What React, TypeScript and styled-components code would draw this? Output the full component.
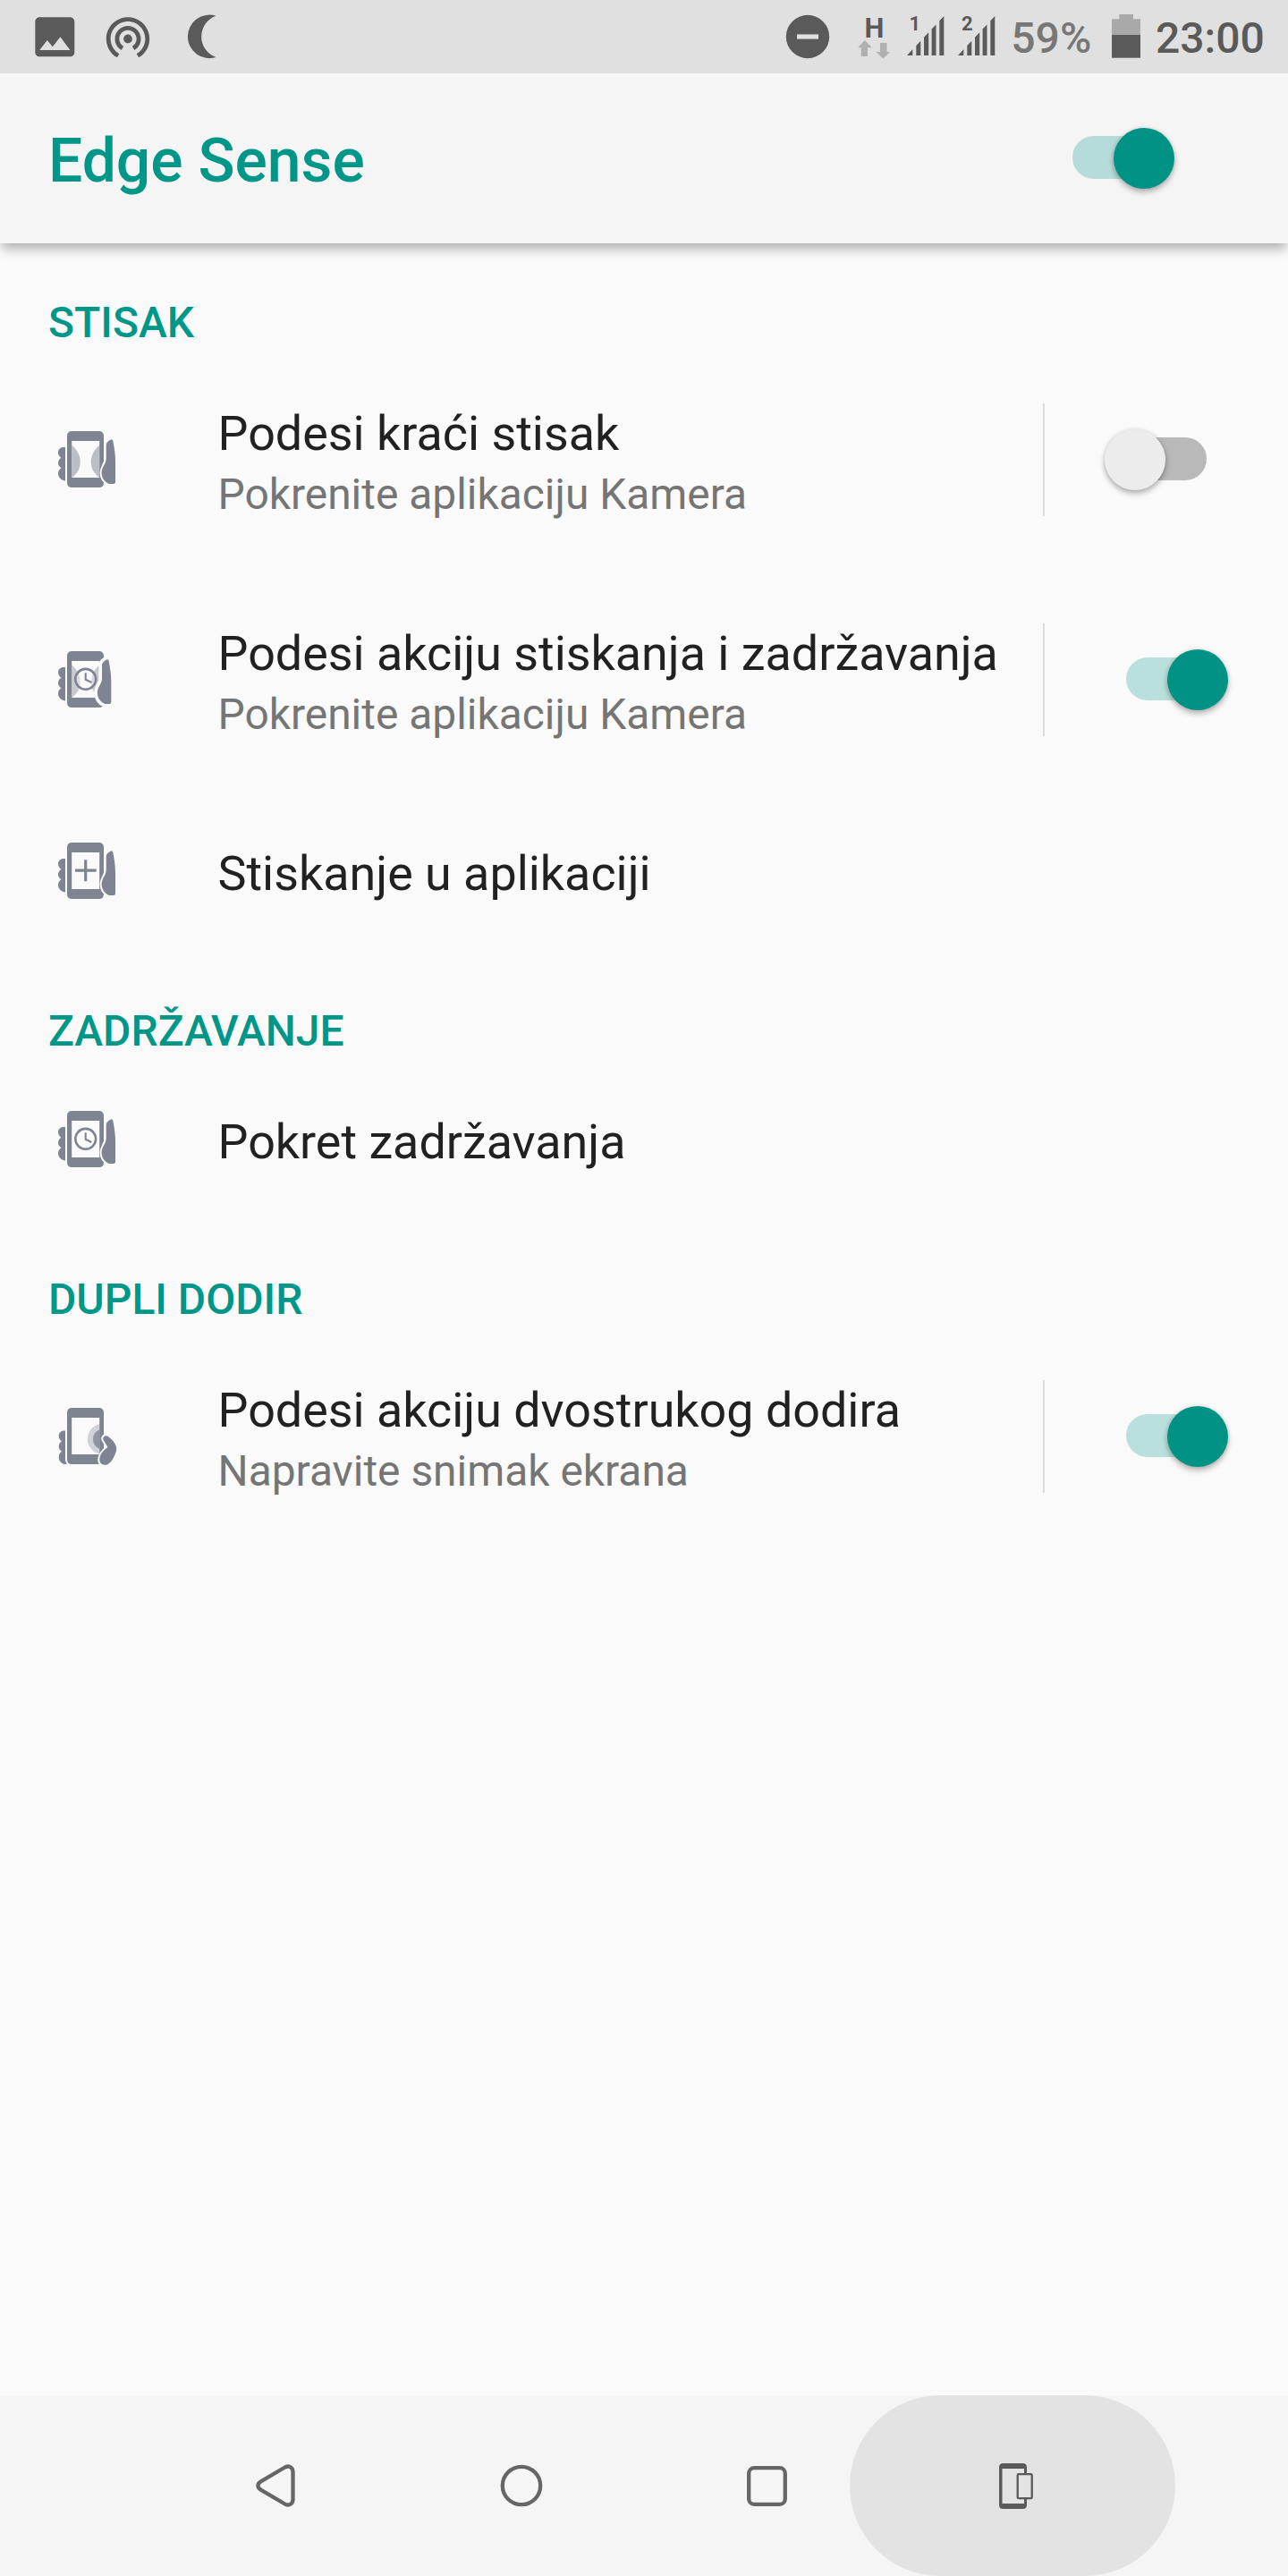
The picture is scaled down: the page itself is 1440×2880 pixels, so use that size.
import React from "react";
import styled, { createGlobalStyle } from "styled-components";

const TEAL = "#009688";
const STATUS_INK = "#5a5a5a";
const GLYPH = "#7e8492";
const SURFACE = "#fafafa";

const GlobalStyle = createGlobalStyle`
  * { box-sizing: border-box; }
  body {
    margin: 0;
    background: ${SURFACE};
    font-family: Roboto, "Noto Sans", sans-serif;
  }
  svg { display: block; flex: none; overflow: visible; }
`;

const Screen = styled.div`
  display: flex;
  flex-direction: column;
  width: 1440px;
  height: 2880px;
  background: ${SURFACE};
  overflow: hidden;
`;

/* ---------- status bar ---------- */

const StatusBar = styled.div`
  position: relative;
  z-index: 2;
  display: flex;
  justify-content: space-between;
  flex: none;
  height: 82px;
  padding: 0 28px 0 32px;
  background: #e0e0e0;
`;

const StatusGroup = styled.div`
  display: flex;
  align-items: center;
`;

const StatusItem = styled.div<{ $before?: number; $lift?: number }>`
  flex: none;
  margin-left: ${(p) => p.$before ?? 0}px;
  margin-bottom: ${(p) => p.$lift ?? 0}px;
`;

const StatusText = styled.div<{ $before: number; $width: number; $color: string }>`
  flex: none;
  width: ${(p) => p.$width}px;
  margin-left: ${(p) => p.$before}px;
  padding-top: 3px;
  font-size: 48px;
  line-height: 56px;
  font-weight: 500;
  white-space: nowrap;
  color: ${(p) => p.$color};
`;

const DataIndicator = styled.div`
  display: flex;
  flex-direction: column;
  align-items: center;
  flex: none;
  width: 36px;
  height: 48px;
  margin-top: 2px;
  margin-left: 32px;
`;

const DataType = styled.span`
  height: 27px;
  font-size: 31px;
  line-height: 27px;
  font-weight: 700;
  color: ${STATUS_INK};
`;

const SignalBox = styled.div<{ $before: number }>`
  position: relative;
  flex: none;
  margin-left: ${(p) => p.$before}px;
  margin-bottom: 2px;
`;

const SimNumber = styled.span<{ $left: number }>`
  position: absolute;
  top: -1px;
  left: ${(p) => p.$left}px;
  font-size: 22px;
  line-height: 20px;
  font-weight: 700;
  color: ${STATUS_INK};
`;

const ImageIcon = () => (
  <svg width="58.6" height="58.6" viewBox="0 0 24 24" fill={STATUS_INK}>
    <path d="M21 19V5c0-1.1-.9-2-2-2H5c-1.1 0-2 .9-2 2v14c0 1.1.9 2 2 2h14c1.1 0 2-.9 2-2zM8.5 13.5l2.5 3.01L14.5 12l4.5 6H5l3.5-4.5z" />
  </svg>
);

const HotspotIcon = () => (
  <svg width="58" height="58" viewBox="0 0 24 24" fill={STATUS_INK}>
    <path d="M12 11c-1.1 0-2 .9-2 2s.9 2 2 2 2-.9 2-2-.9-2-2-2zm6 2c0-3.31-2.69-6-6-6s-6 2.69-6 6c0 2.22 1.21 4.15 3 5.19l1-1.74c-1.19-.7-2-1.97-2-3.45 0-2.21 1.79-4 4-4s4 1.79 4 4c0 1.48-.81 2.75-2 3.45l1 1.74c1.79-1.04 3-2.97 3-5.19zM12 3C6.48 3 2 7.48 2 13c0 3.7 2.01 6.92 4.99 8.65l1-1.73C5.61 18.53 4 15.96 4 13c0-4.42 3.58-8 8-8s8 3.58 8 8c0 2.96-1.61 5.53-4 6.92l1 1.73c2.99-1.73 5-4.95 5-8.65 0-5.52-4.48-10-10-10z" />
  </svg>
);

const MoonIcon = () => (
  <svg width="32" height="50" viewBox="0 0 32 50" fill={STATUS_INK}>
    <path d="M31.4 1.7A24.3 24.3 0 1 0 31.4 48.1A24.7 24.7 0 0 1 31.4 1.7Z" />
  </svg>
);

const DoNotDisturbIcon = () => (
  <svg width="48" height="48" viewBox="0 0 48 48">
    <circle cx="24" cy="24" r="24.2" fill={STATUS_INK} />
    <rect x="12" y="21.4" width="24" height="5.2" fill="#e0e0e0" />
  </svg>
);

const DataArrows = () => (
  <svg width="36" height="21" viewBox="0 0 36 21" fill="#b0b0b0">
    <path d="M7.9 0L15.8 8.3H11V18H3.8V8.3H0Z" />
    <path d="M25 3H32.5V13H36.2L28.4 20.6L20.6 13H25Z" />
  </svg>
);

const SIGNAL_BARS: [number, number][] = [
  [0, 6.3],
  [10.3, 15.3],
  [19, 24.2],
  [27.6, 32.5],
  [36.3, 41.3],
];

const SignalIcon = () => {
  const top = (x: number) => 44 * (1 - x / 41.3);
  return (
    <svg width="41.3" height="44" viewBox="0 0 41.3 44" fill={STATUS_INK}>
      {SIGNAL_BARS.map(([a, b]) => (
        <polygon key={a} points={`${a},44 ${a},${top(a)} ${b},${top(b)} ${b},44`} />
      ))}
    </svg>
  );
};

const BatteryIcon = () => (
  <svg width="32" height="49" viewBox="0 0 32 49">
    <path d="M8.3 0H24V5.3H32V23H0V5.3H8.3Z" fill="#a9a9a9" />
    <rect y="23" width="32" height="25.7" fill={STATUS_INK} />
  </svg>
);

/* ---------- app bar ---------- */

const AppBar = styled.header`
  position: relative;
  z-index: 1;
  display: flex;
  align-items: center;
  justify-content: space-between;
  flex: none;
  height: 190px;
  padding: 0 127px 0 54px;
  background: #f5f5f5;
  box-shadow: 0 8px 12px -2px rgba(0, 0, 0, 0.3);
`;

const Title = styled.h1`
  margin: 6px 0 0;
  font-size: 67.8px;
  line-height: 80px;
  font-weight: 500;
  color: ${TEAL};
`;

/* ---------- switch ---------- */

const Track = styled.div<{ $on: boolean }>`
  position: relative;
  flex: none;
  width: 92px;
  height: 48px;
  margin-top: -2px;
  margin-left: ${(p) => (p.$on ? 0 : 22)}px;
  margin-right: ${(p) => (p.$on ? 22 : 0)}px;
  border-radius: 24px;
  background: ${(p) => (p.$on ? "rgba(0, 150, 136, 0.26)" : "rgba(0, 0, 0, 0.26)")};
`;

const Thumb = styled.div<{ $on: boolean }>`
  position: absolute;
  top: -9px;
  left: ${(p) => (p.$on ? 46 : -22)}px;
  width: 68px;
  height: 68px;
  border-radius: 50%;
  background: ${(p) => (p.$on ? "#009385" : "#ececec")};
  box-shadow: 0 4px 6px rgba(0, 0, 0, 0.26), 0 0 5px rgba(0, 0, 0, 0.12);
`;

const Switch = ({ on }: { on: boolean }) => (
  <Track $on={on} role="switch" aria-checked={on}>
    <Thumb $on={on} />
  </Track>
);

/* ---------- settings list ---------- */

const List = styled.main`
  flex: 1;
  padding-top: 1px;
`;

const Category = styled.h2`
  height: 118px;
  margin: 0;
  padding: 60px 54px 0;
  font-size: 48px;
  line-height: 56px;
  font-weight: 500;
  color: ${TEAL};
`;

const Row = styled.div<{ $tall: boolean }>`
  display: flex;
  height: ${(p) => (p.$tall ? 246 : 182)}px;
  padding-left: 65px;
`;

const RowIcon = styled.div`
  display: flex;
  align-items: center;
  flex: none;
  width: 178.5px;
`;

const RowText = styled.div`
  flex: 1;
  padding-top: 62px;
  white-space: nowrap;
`;

const RowTitle = styled.div`
  font-size: 53.85px;
  line-height: 64px;
  color: #212121;
`;

const RowSummary = styled.div`
  margin-top: 8px;
  font-size: 47.9px;
  line-height: 56px;
  color: #757575;
`;

const Widget = styled.div<{ $end: number }>`
  display: flex;
  align-items: center;
  justify-content: flex-end;
  flex: none;
  width: 274px;
  height: 126px;
  margin-top: 60px;
  padding-right: ${(p) => p.$end}px;
  border-left: 2px solid #dcdcdc;
`;

type Mark = "squeeze" | "hold" | "plus" | "clock" | "tap";

const Fingers = () => (
  <path
    fill={GLYPH}
    d="M8 18H6.2C2.4 18 0 20.6 0 23.8c0 2.5 1.2 4.5 3.4 5.9C1.2 31.3 0 33.2 0 35.5s1.2 4.2 3.4 5.8C1.2 42.9 0 44.9 0 47.4C0 51.6 3.8 55 8 55.5Z"
  />
);

const Palm = ({ shift = 0, gap = 4 }: { shift?: number; gap?: number }) => {
  const d =
    "M57.6 10.2L59.4 9.3Q60.9 9 61.3 11C62.8 18 64 26 64 34V57Q64 59 62 59H57C51.3 56.6 48.6 51.6 48.6 46.2C48.8 40.2 53.7 36 53.7 31V16Q53.7 12.4 57.6 10.2Z";
  return (
    <g transform={`translate(${-shift} 0)`}>
      <path d={d} fill={SURFACE} stroke={SURFACE} strokeWidth={gap} />
      <path d={d} fill={GLYPH} />
    </g>
  );
};

const Clock = () => (
  <g fill="none" stroke={GLYPH}>
    <circle cx="30.7" cy="31.3" r="11.4" strokeWidth="2.6" />
    <path d="M30.7 24.2V31.8L37.3 35" strokeWidth="2.1" />
  </g>
);

const Waves = ({ opacity }: { opacity: number }) => (
  <g fill={GLYPH} opacity={opacity}>
    <path d="M15.3 15.5C21.5 21 24.8 27.5 24.8 34.5S21.5 47.5 15.3 52Z" />
    <path d="M46.2 15.5C40 21 36.7 27.5 36.7 34.5S40 47.5 46.2 52Z" />
  </g>
);

const EdgeIcon = ({ mark }: { mark: Mark }) => (
  <svg width="66" height="64" viewBox="0 0 66 64">
    {mark === "tap" ? (
      <path
        fill={GLYPH}
        d="M8 25.4H6.6C3 25.4.7 28 .7 31.4c0 2.5 1.2 4.5 3.3 5.9C1.8 38.9.7 40.8.7 43.1s1.1 4.1 3.3 5.6C1.8 50.2.7 52.2.7 54.9C.7 59.4 4.2 63 8.2 63L9.8 62.4Q8 60.5 8 58Z"
      />
    ) : (
      <Fingers />
    )}
    <path
      fillRule="evenodd"
      fill={GLYPH}
      d="M15.5 0H45.5Q51 0 51 5.5V57.5Q51 63 45.5 63H15.5Q10 63 10 57.5V5.5Q10 0 15.5 0ZM15.2 11V52H46.2V11Z"
    />
    {mark === "squeeze" && <Waves opacity={0.5} />}
    {mark === "hold" && (
      <>
        <Waves opacity={0.4} />
        <circle cx="30.7" cy="31.3" r="11.4" fill={SURFACE} fillOpacity="0.4" />
      </>
    )}
    {(mark === "hold" || mark === "clock") && <Clock />}
    {mark === "plus" && (
      <path d="M19 31.2H42.7M30.7 19.3V43.3" stroke={GLYPH} strokeWidth="3.2" />
    )}
    {mark === "tap" && (
      <g fill={GLYPH}>
        <path d="M46.2 18C38 20.2 32.8 27 32.8 34.8S38 49.6 46.2 51.8Z" opacity="0.33" />
        <path d="M46.2 24.6C41.8 26.4 39 30.4 39 35S41.8 43.8 46.2 46Z" opacity="0.8" />
      </g>
    )}
    {mark === "tap" ? (
      <path
        fill={GLYPH}
        stroke={SURFACE}
        strokeWidth="4"
        paintOrder="stroke"
        d="M50.4 35.5C49.6 32.5 52.5 30 55.5 31.7C60 34.6 63.5 38.8 65 43.4C65.8 46.6 64.5 50.5 62.3 55C60.3 59.3 57.5 62.5 54 63.7C49.5 64.5 46 62 46.3 57.6C46.8 51.8 50 48 55.4 44Z"
      />
    ) : mark === "hold" ? (
      <Palm shift={4.7} gap={7.2} />
    ) : (
      <Palm gap={4} />
    )}
  </svg>
);

type Item = {
  mark: Mark;
  title: string;
  summary?: string;
  on?: boolean;
};

const SECTIONS: { name: string; items: Item[] }[] = [
  {
    name: "STISAK",
    items: [
      { mark: "squeeze", title: "Podesi kraći stisak", summary: "Pokrenite aplikaciju Kamera", on: false },
      { mark: "hold", title: "Podesi akciju stiskanja i zadržavanja", summary: "Pokrenite aplikaciju Kamera", on: true },
      { mark: "plus", title: "Stiskanje u aplikaciji" },
    ],
  },
  {
    name: "ZADRŽAVANJE",
    items: [{ mark: "clock", title: "Pokret zadržavanja" }],
  },
  {
    name: "DUPLI DODIR",
    items: [{ mark: "tap", title: "Podesi akciju dvostrukog dodira", summary: "Napravite snimak ekrana", on: true }],
  },
];

const SettingRow = ({ item }: { item: Item }) => (
  <Row $tall={item.summary !== undefined}>
    <RowIcon>
      <EdgeIcon mark={item.mark} />
    </RowIcon>
    <RowText>
      <RowTitle>{item.title}</RowTitle>
      {item.summary && <RowSummary>{item.summary}</RowSummary>}
    </RowText>
    {item.on !== undefined && (
      <Widget $end={item.on ? 67 : 91}>
        <Switch on={item.on} />
      </Widget>
    )}
  </Row>
);

/* ---------- navigation bar ---------- */

const NavBar = styled.nav`
  display: flex;
  flex: none;
  height: 202px;
  padding-left: 170.6px;
  background: #f5f5f5;
`;

const NavButton = styled.div<{ $pressed?: boolean }>`
  position: relative;
  display: flex;
  align-items: center;
  justify-content: center;
  width: 274.75px;
  height: 202px;

  &::before {
    content: "";
    display: ${(p) => (p.$pressed ? "block" : "none")};
    position: absolute;
    top: 0;
    left: -45px;
    width: 364px;
    height: 202px;
    border-radius: 101px;
    background: #e3e3e3;
  }

  svg {
    position: relative;
  }
`;

const BackIcon = () => (
  <svg width="44" height="48" viewBox="0 0 44 48" fill="none" stroke="#666" strokeWidth="4.3">
    <path d="M41.5 8.5C41.5 3.5 36.5 .8 32 3.8L6 19.2C1.2 22 1.2 26 6 28.8L32 44.2C36.5 47.2 41.5 44.5 41.5 39.5Z" />
  </svg>
);

const HomeIcon = () => (
  <svg width="48" height="48" viewBox="0 0 48 48" fill="none" stroke="#666" strokeWidth="4.3">
    <circle cx="24" cy="24" r="21.2" />
  </svg>
);

const RecentsIcon = () => (
  <svg width="45" height="45" viewBox="0 0 45 45" fill="none" stroke="#666" strokeWidth="4.3">
    <rect x="2.2" y="2.2" width="40.6" height="40.6" rx="6" />
  </svg>
);

const OneHandIcon = () => (
  <svg width="31" height="51" viewBox="0 0 31 51">
    <path
      fill={STATUS_INK}
      fillRule="evenodd"
      d="M4.5 0H26.5Q31 0 31 4.5V46.5Q31 51 26.5 51H4.5Q0 51 0 46.5V4.5Q0 0 4.5 0ZM3.5 6V45H28V6Z"
    />
    <rect x="20.7" y="12.2" width="16" height="27" rx="1.2" fill="#e3e3e3" stroke={STATUS_INK} strokeWidth="2.3" />
  </svg>
);

export default function App() {
  return (
    <>
      <GlobalStyle />
      <Screen>
        <StatusBar>
          <StatusGroup>
            <StatusItem><ImageIcon /></StatusItem>
            <StatusItem $before={23.5}><HotspotIcon /></StatusItem>
            <StatusItem $before={38}><MoonIcon /></StatusItem>
          </StatusGroup>
          <StatusGroup>
            <StatusItem><DoNotDisturbIcon /></StatusItem>
            <DataIndicator>
              <DataType>H</DataType>
              <DataArrows />
            </DataIndicator>
            <SignalBox $before={18.2}>
              <SignalIcon />
              <SimNumber $left={3}>1</SimNumber>
            </SignalBox>
            <SignalBox $before={15.7}>
              <SignalIcon />
              <SimNumber $left={4.5}>2</SimNumber>
            </SignalBox>
            <StatusText $before={18.5} $width={90} $color="#777777">59%</StatusText>
            <StatusItem $before={22.5} $lift={2}><BatteryIcon /></StatusItem>
            <StatusText $before={17.2} $width={120} $color={STATUS_INK}>23:00</StatusText>
          </StatusGroup>
        </StatusBar>

        <AppBar>
          <Title>Edge Sense</Title>
          <Switch on />
        </AppBar>

        <List>
          {SECTIONS.map((section) => (
            <section key={section.name}>
              <Category>{section.name}</Category>
              {section.items.map((item) => (
                <SettingRow key={item.title} item={item} />
              ))}
            </section>
          ))}
        </List>

        <NavBar>
          <NavButton><BackIcon /></NavButton>
          <NavButton><HomeIcon /></NavButton>
          <NavButton><RecentsIcon /></NavButton>
          <NavButton $pressed><OneHandIcon /></NavButton>
        </NavBar>
      </Screen>
    </>
  );
}
